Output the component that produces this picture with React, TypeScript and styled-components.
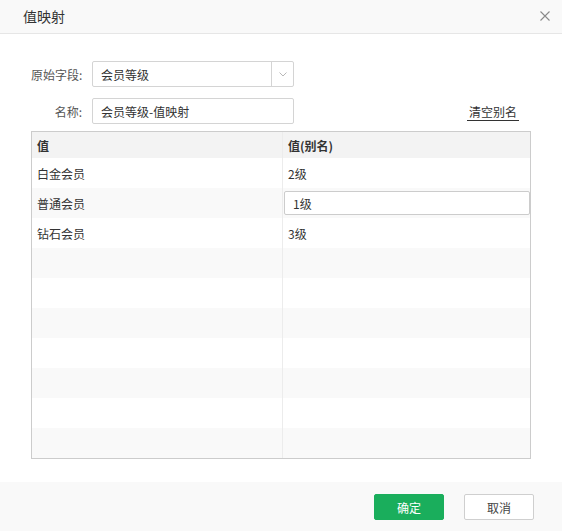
import React, { useState } from 'react'
import styled, { createGlobalStyle } from 'styled-components'

const GlobalStyle = createGlobalStyle`
  html, body {
    margin: 0;
    padding: 0;
    background: #fff;
  }
  body {
    font-family: "Noto Sans CJK SC", "Noto Sans", "Liberation Sans", sans-serif;
    font-size: 12px;
    color: #333;
  }
  * {
    box-sizing: border-box;
  }
`

const Dialog = styled.div`
  width: 562px;
  height: 531px;
  display: flex;
  flex-direction: column;
  background: #fff;
`

const Header = styled.div`
  height: 34px;
  flex: none;
  display: flex;
  align-items: center;
  justify-content: space-between;
  padding: 0 12px 2px 23px;
  background: #f9f9f9;
  border-bottom: 1px solid #e6e6e6;
`

const Title = styled.div`
  font-size: 14px;
  color: #333;
`

const CloseButton = styled.button`
  border: 0;
  background: none;
  padding: 0;
  width: 10px;
  height: 10px;
  display: flex;
  cursor: pointer;
`

const Body = styled.div`
  flex: 1;
  padding: 27px 31px 0 31px;
  display: flex;
  flex-direction: column;
`

const FormRow = styled.div`
  display: flex;
  align-items: center;
  height: 26px;
  margin-bottom: ${(p: { gap: number }) => p.gap}px;
`

const Label = styled.div`
  width: 51px;
  margin-right: 10px;
  text-align: right;
  color: #555;
  white-space: nowrap;
`

const SelectBox = styled.div`
  width: 202px;
  height: 26px;
  border: 1px solid #d4d4d4;
  border-radius: 2px;
  display: flex;
  align-items: stretch;
  background: #fff;
`

const SelectValue = styled.div`
  flex: 1;
  display: flex;
  align-items: center;
  padding-left: 8px;
  color: #333;
`

const SelectArrow = styled.div`
  width: 22px;
  border-left: 1px solid #d4d4d4;
  display: flex;
  align-items: center;
  justify-content: center;
`

const TextInput = styled.input`
  width: 202px;
  height: 26px;
  border: 1px solid #d4d4d4;
  border-radius: 2px;
  padding: 0 8px;
  font: inherit;
  color: #333;
  outline: none;
`

const ClearLink = styled.a`
  margin-left: auto;
  margin-right: 12px;
  color: #333;
  text-decoration: none;
  border-bottom: 1px solid #333;
  padding: 0 2px;
  line-height: 16px;
  margin-top: 2px;
  cursor: pointer;
`

const Table = styled.div`
  width: 500px;
  border: 1px solid #cccccc;
  display: flex;
  flex-direction: column;
`

const HeadRow = styled.div`
  display: grid;
  grid-template-columns: 250px 1fr;
  height: 26px;
  background: #f3f3f3;
`

const HeadCell = styled.div`
  display: flex;
  align-items: center;
  padding-left: 5px;
  font-weight: bold;
  color: #333;
  & + & {
    border-left: 1px solid #ececec;
  }
`

const Row = styled.div<{ striped: boolean }>`
  display: grid;
  grid-template-columns: 250px 1fr;
  height: 30px;
  background: ${(p) => (p.striped ? '#f9f9f9' : '#fff')};
`

const Cell = styled.div`
  display: flex;
  align-items: center;
  padding-left: 5px;
  color: #333;
  & + & {
    border-left: 1px solid #ececec;
  }
`

const EditCell = styled.div`
  display: flex;
  align-items: center;
  padding: 0 0 0 1px;
  border-left: 1px solid #ececec;
`

const CellInput = styled.input`
  width: 246px;
  height: 24px;
  border: 1px solid #cccccc;
  border-radius: 2px;
  background: #fff;
  padding: 0 8px;
  font: inherit;
  color: #333;
  outline: none;
`

const Footer = styled.div`
  height: 49px;
  flex: none;
  background: #f9f9f9;
  display: flex;
  justify-content: flex-end;
  align-items: flex-start;
  gap: 20px;
  padding: 12px 28px 0 0;
`

const Button = styled.button<{ primary?: boolean }>`
  width: 70px;
  height: 26px;
  border-radius: 2px;
  font: inherit;
  font-size: 12px;
  cursor: pointer;
  border: 1px solid ${(p) => (p.primary ? '#1aae5c' : '#cfcfcf')};
  background: ${(p) => (p.primary ? '#1aae5c' : '#fff')};
  color: ${(p) => (p.primary ? '#fff' : '#444')};
`

const rows = [
  { value: '白金会员', alias: '2级' },
  { value: '普通会员', alias: '1级', editing: true },
  { value: '钻石会员', alias: '3级' },
]

const App = () => {
  const [name, setName] = useState('会员等级-值映射')
  const [editValue, setEditValue] = useState('1级')
  const filled = [...rows, ...Array.from({ length: 10 - rows.length }, () => null)]

  return (
    <>
      <GlobalStyle />
      <Dialog>
        <Header>
          <Title>值映射</Title>
          <CloseButton aria-label="close">
            <svg width="10" height="10" viewBox="0 0 10 10">
              <path d="M0.5 0.5L9.5 9.5M9.5 0.5L0.5 9.5" stroke="#8a8a8a" strokeWidth="1.1" />
            </svg>
          </CloseButton>
        </Header>
        <Body>
          <FormRow gap={11}>
            <Label>原始字段:</Label>
            <SelectBox>
              <SelectValue>会员等级</SelectValue>
              <SelectArrow>
                <svg width="8" height="5" viewBox="0 0 8 5">
                  <path d="M0.5 0.5L4 4L7.5 0.5" fill="none" stroke="#b8b8b8" strokeWidth="1" />
                </svg>
              </SelectArrow>
            </SelectBox>
          </FormRow>
          <FormRow gap={7}>
            <Label>名称:</Label>
            <TextInput value={name} onChange={(e) => setName(e.target.value)} />
            <ClearLink>清空别名</ClearLink>
          </FormRow>
          <Table>
            <HeadRow>
              <HeadCell>值</HeadCell>
              <HeadCell>值(别名)</HeadCell>
            </HeadRow>
            {filled.map((r, i) => (
              <Row key={i} striped={i % 2 === 1}>
                <Cell>{r ? r.value : ''}</Cell>
                {r && r.editing ? (
                  <EditCell>
                    <CellInput value={editValue} onChange={(e) => setEditValue(e.target.value)} />
                  </EditCell>
                ) : (
                  <Cell>{r ? r.alias : ''}</Cell>
                )}
              </Row>
            ))}
          </Table>
        </Body>
        <Footer>
          <Button primary>确定</Button>
          <Button>取消</Button>
        </Footer>
      </Dialog>
    </>
  )
}

export default App
